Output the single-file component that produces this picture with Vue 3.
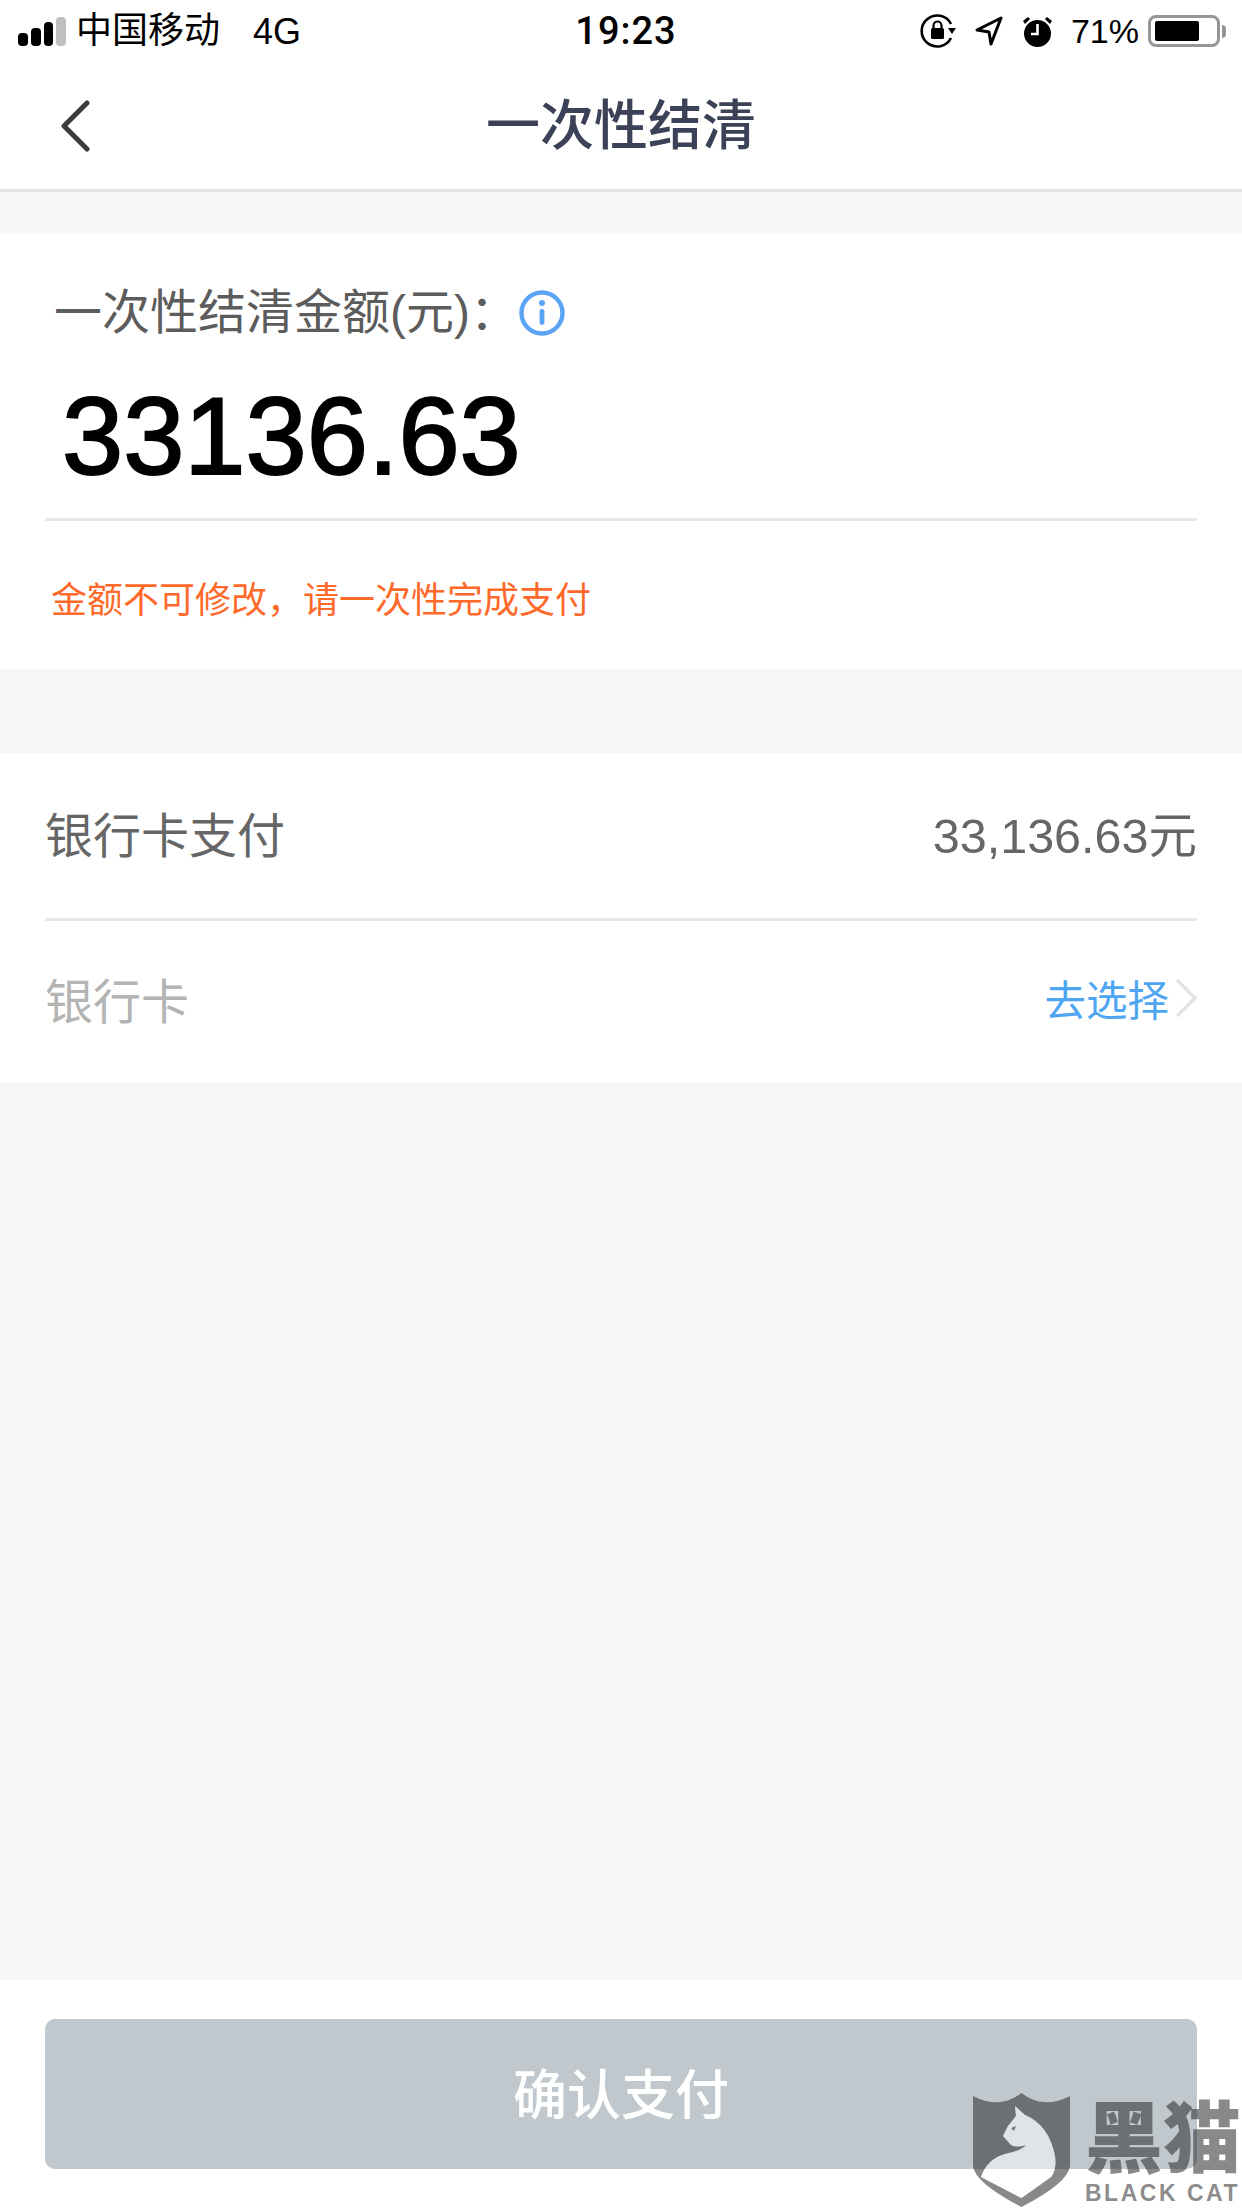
<script setup>
const bars = [13, 18, 24, 29]
</script>

<template>
  <div class="page">
    <header class="status">
      <div class="status-left">
        <div class="signal">
          <i v-for="(h, n) in bars" :key="n" :class="{ off: n === 3 }" :style="{ height: h + 'px' }"></i>
        </div>
        <span class="carrier">中国移动</span>
        <span class="net">4G</span>
      </div>
      <div class="time">19:23</div>
      <div class="status-right">
        <svg class="ic-lock" width="36" height="36" viewBox="0 0 36 36">
          <path d="M31 11A15.5 15.5 0 1 0 31 25" fill="none" stroke="#000" stroke-width="2.6"/>
          <path d="M28 15h8l-4 6z" fill="#000"/>
          <rect x="11" y="15" width="13" height="11" rx="1.5" fill="#000"/>
          <path d="M13.5 15v-2.5a4 4 0 0 1 8 0V15" fill="none" stroke="#000" stroke-width="2.2"/>
        </svg>
        <svg class="ic-loc" width="28" height="32" viewBox="0 0 28 32">
          <path d="M2 15L26 3 16 29 14 17z" fill="none" stroke="#000" stroke-width="3" stroke-linejoin="round"/>
        </svg>
        <svg class="ic-alarm" width="31" height="33" viewBox="0 0 31 33">
          <circle cx="15.5" cy="18.5" r="13.5" fill="#000"/>
          <path d="M15.5 9v10H9" fill="none" stroke="#fff" stroke-width="2.6"/>
          <path d="M1 6l5-4 2 2-5 5zM30 6l-5-4-2 2 5 5z" fill="#000"/>
        </svg>
        <span class="pct">71%</span>
        <div class="battery"><div class="level"></div></div>
        <div class="nub"></div>
      </div>
    </header>

    <nav class="nav">
      <svg class="back" width="30" height="52" viewBox="0 0 30 52">
        <path d="M27 3L4 26l23 23" fill="none" stroke="#3c3c3c" stroke-width="5" stroke-linecap="round" stroke-linejoin="round"/>
      </svg>
      <h1 class="title">一次性结清</h1>
      <span></span>
    </nav>

    <main class="main">
      <section class="card amount-card">
        <div class="label-row">
          <span class="label">一次性结清金额(元)：</span>
          <svg class="info" width="46" height="46" viewBox="0 0 46 46">
            <circle cx="23" cy="23" r="20.5" fill="none" stroke="#5ba3f5" stroke-width="4.4"/>
            <circle cx="23" cy="13" r="3" fill="#5ba3f5"/>
            <rect x="20.6" y="19" width="4.8" height="16" rx="2.4" fill="#5ba3f5"/>
          </svg>
        </div>
        <div class="amount">33136.63</div>
        <p class="notice">金额不可修改，请一次性完成支付</p>
      </section>

      <section class="card pay-card">
        <div class="row row-first">
          <span class="row-name">银行卡支付</span>
          <span class="row-value">33,136.63元</span>
        </div>
        <div class="row row-second">
          <span class="row-name muted">银行卡</span>
          <span class="pick">
            去选择
            <svg width="22" height="40" viewBox="0 0 22 40">
              <path d="M2 2l18 18L2 38" fill="none" stroke="#e4e4e4" stroke-width="3.4"/>
            </svg>
          </span>
        </div>
      </section>
    </main>

    <footer class="footer">
      <button class="confirm">确认支付</button>
    </footer>

    <div class="watermark">
      <svg class="shield" width="98" height="115" viewBox="0 0 98 115">
        <path fill-rule="evenodd" fill="rgba(40,40,40,.55)" d="M0 3Q27 17 48.500 0Q70 17 97 3V73Q95 90 48.500 114Q2 90 0 73ZM42 13L52 22Q76 32 82 63Q84 76 78 84L48.500 105 8 84Q14 66 32 61Q48 58 53 52Q44 55 38 52L30 43 35 33 43 23Z"/>
        <path fill="rgba(255,255,255,.5)" d="M42 13L52 22Q76 32 82 63Q84 76 78 84L48.500 105 8 84Q14 66 32 61Q48 58 53 52Q44 55 38 52L30 43 35 33 43 23Z"/>
        <path fill="rgba(40,40,40,.6)" d="M38 35l5-2-2 5z"/>
      </svg>
      <div class="brand">
        <div class="brand-cn">黑猫</div>
        <div class="brand-en">BLACK CAT</div>
      </div>
    </div>
  </div>
</template>

<style scoped>
.page {
  position: relative;
  width: 1242px;
  height: 2208px;
  display: flex;
  flex-direction: column;
  background: #f7f7f7;
  overflow: hidden;
  font-family: "Liberation Sans", "Noto Sans CJK SC", sans-serif;
}
.status {
  height: 62px;
  flex: none;
  background: #fff;
  display: grid;
  grid-template-columns: 1fr auto 1fr;
  align-items: center;
  color: #000;
  font-size: 36px;
  padding: 0 16px 0 18px;
}
.status-left { display: flex; align-items: center; }
.signal { display: flex; align-items: flex-end; gap: 3px; width: 48px; height: 29px; }
.signal i { display: block; width: 10px; border-radius: 4px; background: #000; }
.signal i.off { background: #bfbfbf; }
.carrier { margin-left: 10px; line-height: 1; }
.net { margin-left: 33px; line-height: 1; font-size: 36px; margin-top: 2px; }
.time { font-family: Roboto, "Liberation Sans", sans-serif; font-weight: 500; font-size: 38px; letter-spacing: 1px; margin-left: 8px; }
.status-right { display: flex; align-items: center; justify-content: flex-end; }
.ic-lock { margin-right: 19px; }
.ic-loc { margin-right: 19px; }
.ic-alarm { margin-right: 18px; }
.pct { margin-right: 9px; font-size: 34px; }
.battery {
  width: 72px;
  height: 32px;
  box-sizing: border-box;
  border: 3px solid #969696;
  border-radius: 8px;
  padding: 3px;
}
.level { width: 44px; height: 100%; background: #000; border-radius: 2px; margin-left: 1px; }
.nub { width: 4px; height: 13px; margin-left: 2px; background: #969696; border-radius: 0 4px 4px 0; }

.nav {
  height: 127px;
  flex: none;
  box-sizing: content-box;
  background: #fff;
  border-bottom: 3px solid #e3e3e3;
  display: grid;
  grid-template-columns: 1fr auto 1fr;
  align-items: center;
  padding: 0 60px;
}
.title { margin: 0; font-size: 54px; font-weight: 500; color: #3b4257; line-height: 1; }

.main { flex: 1; padding-top: 42px; }
.card { background: #fff; }
.amount-card { height: 435px; padding: 0 45px; box-sizing: border-box; }
.label-row { display: flex; align-items: center; height: 158px; padding-left: 9px; }
.label { font-size: 48px; font-weight: 400; color: #5c5c5c; line-height: 1; width: 465px; white-space: nowrap; }
.amount {
  font-size: 110px;
  color: #000;
  line-height: 126px;
  height: 126px;
  margin-top: -19px;
  padding-left: 17px;
  padding-bottom: 19px;
  border-bottom: 3px solid #e8e8e8;
  box-sizing: content-box;
  -webkit-text-stroke: 2px #000;
}
.notice { margin: 53px 0 0 6px; font-size: 36px; line-height: 54px; color: #ff6a2b; }

.pay-card { margin-top: 84px; height: 330px; padding: 0 45px; box-sizing: border-box; }
.row { display: flex; align-items: center; justify-content: space-between; box-sizing: border-box; }
.row-first { height: 168px; border-bottom: 3px solid #e8e8e8; padding-bottom: 7px; }
.row-second { height: 162px; padding-bottom: 9px; }
.row-name { font-size: 48px; color: #666; }
.row-name.muted { color: #b4b4b4; }
.row-value { font-size: 48.500px; color: #666; }
.pick { display: flex; align-items: center; font-size: 41.500px; color: #4ea5f2; gap: 6px; }

.footer {
  height: 228px;
  flex: none;
  background: #fff;
  box-sizing: border-box;
  padding: 39px 45px;
}
.confirm {
  width: 100%;
  height: 150px;
  border: 0;
  border-radius: 10px;
  background: #c0c8ce;
  color: #fff;
  font-family: inherit;
  font-size: 54px;
  font-weight: 500;
  padding: 0 0 6px;
}
.watermark {
  position: absolute;
  left: 973px;
  top: 2093px;
  display: flex;
  gap: 14px;
}
.brand { margin-top: 8px; width: 156px; }
.brand-cn {
  font-size: 78px;
  line-height: 78px;
  font-weight: 900;
  color: rgba(40,40,40,.55);
  white-space: nowrap;
}
.brand-en {
  margin-top: 2px;
  font-size: 23px;
  line-height: 24px;
  font-weight: 700;
  letter-spacing: 2.500px;
  color: rgba(40,40,40,.55);
  white-space: nowrap;
}
</style>
